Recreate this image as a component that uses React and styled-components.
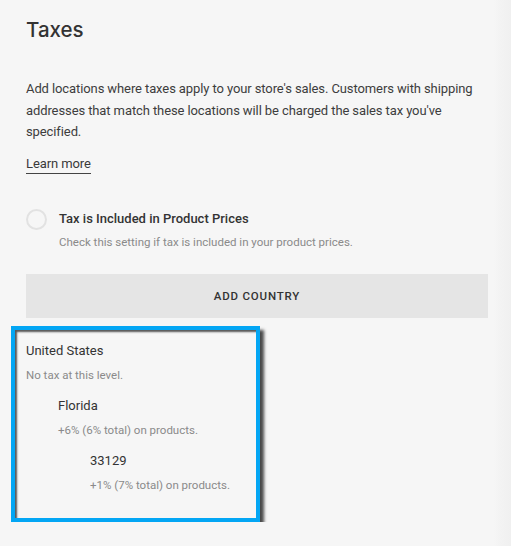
import React from "react";
import styled, { createGlobalStyle } from "styled-components";

const GlobalStyle = createGlobalStyle`
  html, body {
    margin: 0;
    padding: 0;
  }
  body {
    background: linear-gradient(to right, #f6f6f6 0, #f6f6f6 494px, #f3f3f3 500px, #f0f0f0 511px);
    font-family: Roboto, "Noto Sans", sans-serif;
    color: #3a3a3a;
    -webkit-font-smoothing: antialiased;
  }
`;

const locations = [
  { name: "United States", rate: "No tax at this level.", level: 0 },
  { name: "Florida", rate: "+6% (6% total) on products.", level: 1 },
  { name: "33129", rate: "+1% (7% total) on products.", level: 2 },
];

const App = () => {
  return (
    <>
      <GlobalStyle />
      <Page>
        <Title>Taxes</Title>
        <Intro>
          Add locations where taxes apply to your store's sales. Customers with shipping
          addresses that match these locations will be charged the sales tax you've
          specified.
        </Intro>
        <LearnMore href="#">Learn more</LearnMore>

        <Setting>
          <Radio />
          <SettingText>
            <SettingLabel>Tax is Included in Product Prices</SettingLabel>
            <SettingHint>Check this setting if tax is included in your product prices.</SettingHint>
          </SettingText>
        </Setting>

        <AddButton>ADD COUNTRY</AddButton>

        <Highlight>
          {locations.map((loc) => (
            <Location key={loc.name} $level={loc.level}>
              <LocationName>{loc.name}</LocationName>
              <LocationRate>{loc.rate}</LocationRate>
            </Location>
          ))}
        </Highlight>
      </Page>
    </>
  );
};

const Page = styled.div`
  display: flex;
  flex-direction: column;
  align-items: flex-start;
  padding: 15px 23px 0 26px;
  width: 462px;
`;

const Title = styled.h1`
  margin: 0;
  font-family: Inter, Roboto, sans-serif;
  font-size: 20.5px;
  font-weight: 500;
  line-height: 30px;
  color: #333;
`;

const Intro = styled.p`
  margin: 33px 0 0;
  font-size: 13px;
  letter-spacing: -0.1px;
  line-height: 21.6px;
  color: #3d3d3d;
`;

const LearnMore = styled.a`
  margin-top: 13px;
  font-size: 13px;
  letter-spacing: -0.1px;
  line-height: 16px;
  color: #3a3a3a;
  text-decoration: none;
  border-bottom: 1px solid #444;
  padding-bottom: 1px;
`;

const Setting = styled.div`
  display: flex;
  align-items: flex-start;
  gap: 12px;
  margin-top: 35px;
`;

const Radio = styled.span`
  width: 17px;
  height: 17px;
  border: 2px solid #e2e2e2;
  border-radius: 50%;
  flex: none;
`;

const SettingText = styled.div`
  display: flex;
  flex-direction: column;
  gap: 7px;
  margin-top: 2px;
`;

const SettingLabel = styled.div`
  font-size: 13px;
  font-weight: 500;
  line-height: 16px;
  color: #333;
`;

const SettingHint = styled.div`
  font-size: 11.5px;
  line-height: 16px;
  color: #8a8a8a;
`;

const AddButton = styled.button`
  margin-top: 24px;
  width: 462px;
  height: 44px;
  border: none;
  background: #e5e5e5;
  font-family: Roboto, "Noto Sans", sans-serif;
  font-size: 11.5px;
  font-weight: 500;
  letter-spacing: 0.8px;
  color: #333;
  cursor: pointer;
`;

const Highlight = styled.div`
  margin: 8px 0 0 -15px;
  width: 230px;
  border: 4px solid #03a6f4;
  padding: 12px 0 25px 11px;
  box-shadow: 4px 4px 3px rgba(0, 0, 0, 0.7), inset 2px 2px 2px rgba(0, 0, 0, 0.65);
  display: flex;
  flex-direction: column;
  gap: 14px;
`;

const Location = styled.div`
  display: flex;
  flex-direction: column;
  gap: 7px;
  padding-left: ${(p) => p.$level * 32}px;
`;

const LocationName = styled.div`
  font-size: 13px;
  line-height: 18px;
  color: #333;
`;

const LocationRate = styled.div`
  font-size: 11.5px;
  line-height: 16px;
  color: #8a8a8a;
`;

export default App;
